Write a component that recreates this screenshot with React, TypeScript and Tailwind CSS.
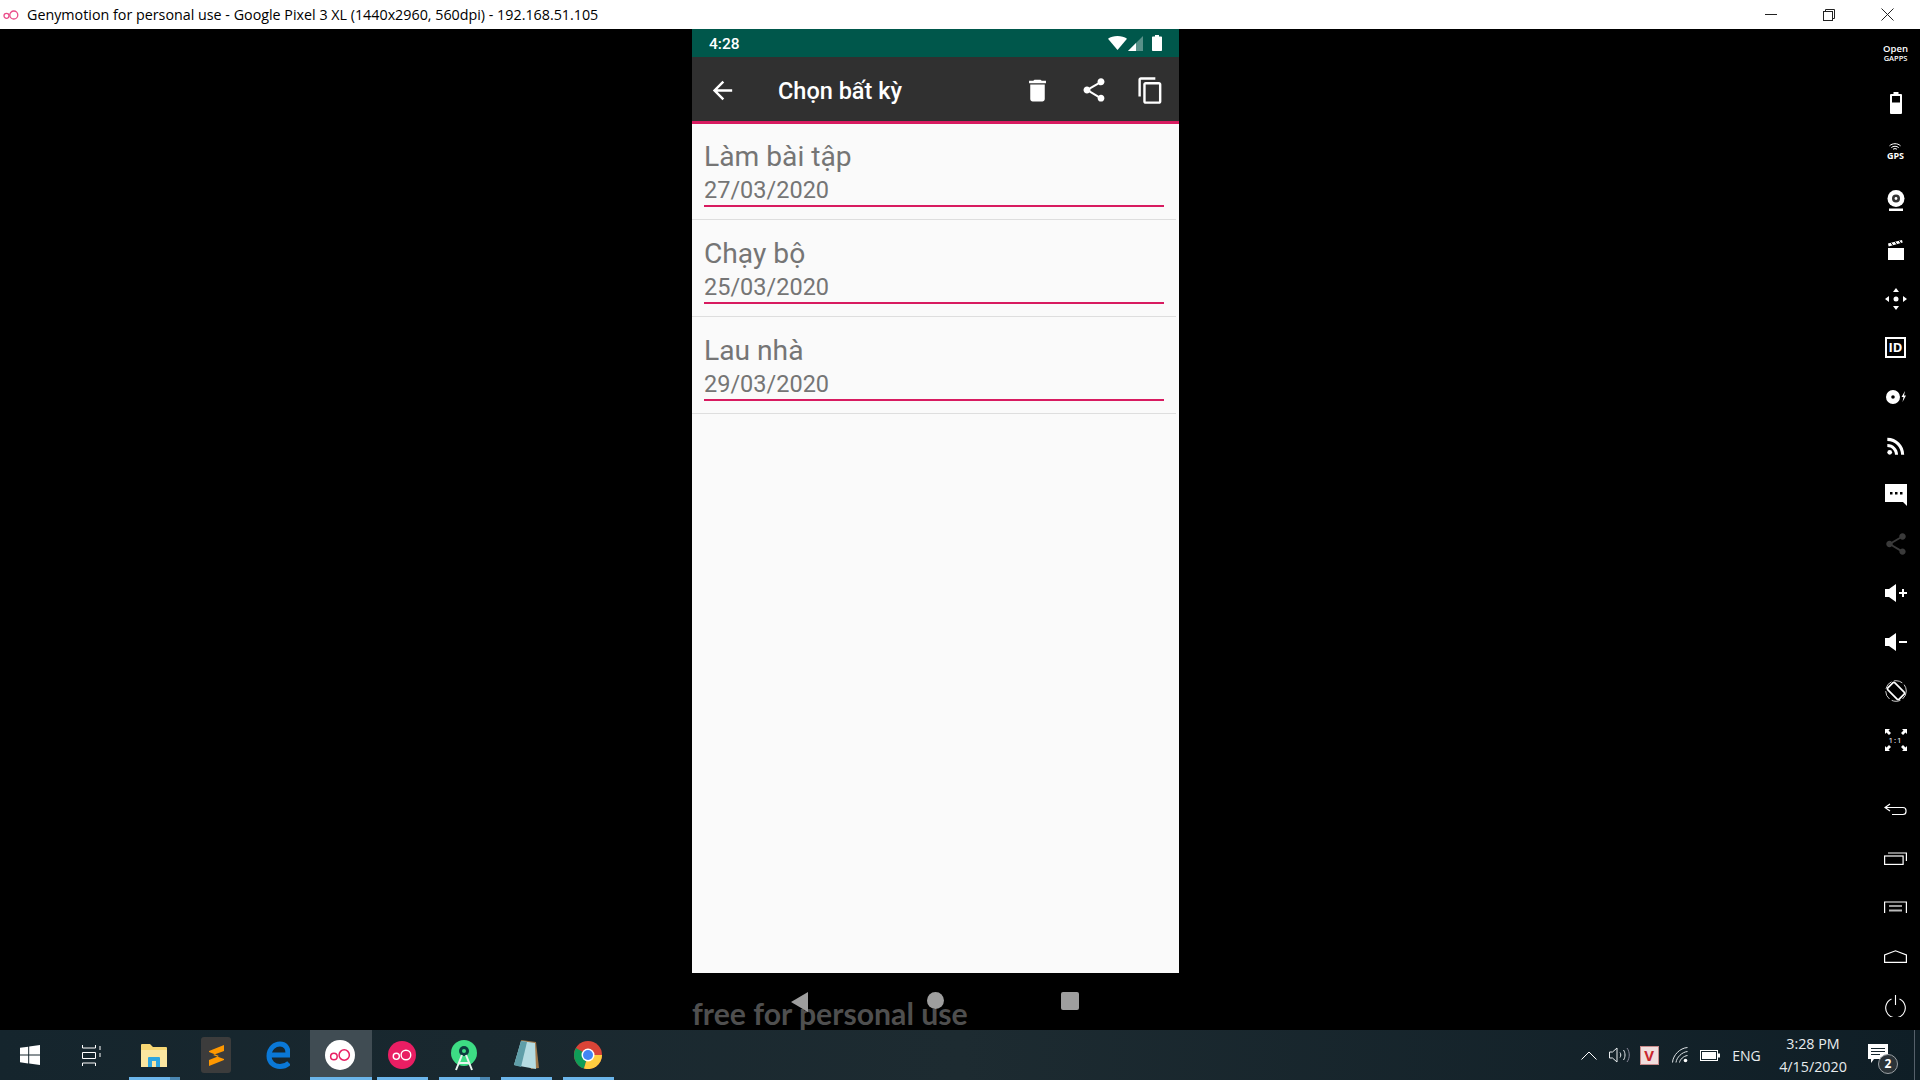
import { MdArrowBack, MdContentCopy, MdDelete, MdShare, MdRssFeed } from "react-icons/md"
import type { ReactNode } from "react"

const tasks = [
    { title: "Làm bài tập", date: "27/03/2020" },
    { title: "Chạy bộ", date: "25/03/2020" },
    { title: "Lau nhà", date: "29/03/2020" },
]

function GenyLogo({ size, ring, bg }: { size: number; ring: string; bg: string }) {
    return (
        <svg width={size} height={size} viewBox="0 0 32 32">
            <circle cx="16" cy="16" r="16" fill={bg} />
            <circle cx="9.500" cy="17.500" r="3.500" fill="none" stroke={ring} strokeWidth="1.600" />
            <circle cx="20.500" cy="16" r="5.500" fill="none" stroke={ring} strokeWidth="1.600" />
        </svg>
    )
}

function SideSlot({ children }: { children: ReactNode }) {
    return <div className="h-[49px] shrink-0 flex items-center justify-center text-white">{children}</div>
}

function Sidebar() {
    return (
        <div className="w-[49px] shrink-0 flex flex-col font-['Open_Sans',sans-serif]">
            <SideSlot>
                <div className="flex flex-col items-center gap-[2px] text-white">
                    <span className="text-[9.500px] font-semibold leading-[8px]">Open</span>
                    <span className="text-[7.500px] font-semibold leading-[7px]">GAPPS</span>
                </div>
            </SideSlot>
            <SideSlot>
                <svg width="12" height="22" viewBox="0 0 12 22" fill="white">
                    <path d="M3.500 0h5v2H11a1 1 0 0 1 1 1v18a1 1 0 0 1-1 1H1a1 1 0 0 1-1-1V3a1 1 0 0 1 1-1h2.500z" />
                    <rect x="2" y="4" width="8" height="6.500" fill="black" />
                </svg>
            </SideSlot>
            <SideSlot>
                <div className="flex flex-col items-center">
                    <svg width="12" height="8" viewBox="0 0 12 8" fill="none" stroke="white" strokeWidth="1">
                        <path d="M.5 2.800C3.500 0 8.500 0 11.500 2.800M2.300 4.600c2-1.800 5.400-1.800 7.400 0M4 6.300c1.100-.9 2.900-.9 4 0" />
                    </svg>
                    <span className="text-[9px] font-bold leading-[10px]">GPS</span>
                </div>
            </SideSlot>
            <SideSlot>
                <svg width="18" height="21" viewBox="0 0 18 21">
                    <circle cx="9" cy="8.500" r="8.500" fill="white" />
                    <circle cx="9" cy="8.500" r="4" fill="#333" />
                    <circle cx="9" cy="8.500" r="1.400" fill="white" />
                    <rect x="2" y="18.500" width="14" height="2.500" fill="white" />
                </svg>
            </SideSlot>
            <SideSlot>
                <svg width="16" height="20" viewBox="0 0 16 20" fill="white">
                    <rect x="0" y="8" width="16" height="12" />
                    <path d="M0 3.500 14 0l.7 2.600L.7 6.400z" />
                    <path d="M3 2.700 5 5.500M7 1.700l2 2.800M11 .7l2 2.800" stroke="black" strokeWidth="1" />
                </svg>
            </SideSlot>
            <SideSlot>
                <svg width="22" height="22" viewBox="0 0 22 22" fill="white">
                    <path d="M11 0l3 4H8zM11 22l-3-4h6zM0 11l4-3v6zM22 11l-4 3V8z" />
                    <circle cx="11" cy="11" r="2.500" />
                </svg>
            </SideSlot>
            <SideSlot>
                <div className="w-[21px] h-[21px] border-2 border-white flex items-center justify-center text-[13px] font-bold leading-none">
                    ID
                </div>
            </SideSlot>
            <SideSlot>
                <svg width="20" height="14" viewBox="0 0 20 14" fill="white">
                    <path fillRule="evenodd" d="M7 0a7 7 0 1 1 0 14A7 7 0 0 1 7 0zm0 5.200a1.800 1.800 0 1 0 0 3.600 1.800 1.800 0 0 0 0-3.600z" />
                    <path d="M19 1l-3.500 6h2l-1 5L20 5.500h-2z" />
                </svg>
            </SideSlot>
            <SideSlot>
                <MdRssFeed size={26} />
            </SideSlot>
            <SideSlot>
                <svg width="22" height="22" viewBox="0 0 22 22" fill="white">
                    <path fillRule="evenodd" d="M0 0h22v22l-4-4H0zm5 8v2.500h2.500V8zm5 0v2.500h2.500V8zm5 0v2.500h2.500V8z" />
                </svg>
            </SideSlot>
            <SideSlot>
                <MdShare size={26} color="#3a3a3a" />
            </SideSlot>
            <SideSlot>
                <svg width="22" height="18" viewBox="0 0 22 18" fill="white">
                    <path d="M0 5h4l7-5v18l-7-5H0z" />
                    <path d="M14 8h3V5h2v3h3v2h-3v3h-2v-3h-3z" />
                </svg>
            </SideSlot>
            <SideSlot>
                <svg width="22" height="18" viewBox="0 0 22 18" fill="white">
                    <path d="M0 5h4l7-5v18l-7-5H0z" />
                    <rect x="14" y="8" width="8" height="2" />
                </svg>
            </SideSlot>
            <SideSlot>
                <svg width="22" height="22" viewBox="0 0 22 22" fill="none" stroke="white">
                    <circle cx="11" cy="11" r="10.300" strokeWidth=".8" strokeDasharray="9 2.500" />
                    <rect x="6" y="3" width="10" height="16" rx="1.500" strokeWidth="1.700" transform="rotate(-45 11 11)" />
                </svg>
            </SideSlot>
            <SideSlot>
                <div className="relative w-[22px] h-[22px] flex items-center justify-center text-[8px] tracking-[1px] leading-none">
                    1:1
                    <svg className="absolute inset-0" width="22" height="22" viewBox="0 0 22 22" fill="white">
                        <path d="M0 0h5L3.500 1.500 6 4 4 6 1.500 3.500 0 5zM22 0v5l-1.500-1.500L18 6l-2-2 2.500-2.500L17 0zM0 22v-5l1.500 1.500L4 16l2 2-2.500 2.500L5 22zM22 22h-5l1.500-1.500L16 18l2-2 2.500 2.500L22 17z" />
                    </svg>
                </div>
            </SideSlot>
            <div className="h-[21px] shrink-0" />
            <SideSlot>
                <svg width="23" height="13" viewBox="0 0 23 13" fill="none" stroke="white" strokeWidth="1.200">
                    <path d="M6 1 1 4.500 6 8" />
                    <path d="M1 4.500h18a3 3 0 0 1 3 3v1a3 3 0 0 1-3 3H8" />
                </svg>
            </SideSlot>
            <SideSlot>
                <svg width="23" height="13" viewBox="0 0 23 13" fill="none" stroke="white" strokeWidth="1.200">
                    <rect x=".6" y="4" width="18.500" height="8.400" />
                    <path d="M4 1h18.400v8" />
                </svg>
            </SideSlot>
            <SideSlot>
                <svg width="23" height="13" viewBox="0 0 23 13" fill="none" stroke="white" strokeWidth="1.200">
                    <path d="M.6 12V1h21.800v11" />
                    <path d="M5 5h13" />
                    <path d="M5 9.500h13" stroke="#bbb" strokeWidth="2" />
                </svg>
            </SideSlot>
            <SideSlot>
                <svg width="23" height="13" viewBox="0 0 23 13" fill="none" stroke="white" strokeWidth="1.200">
                    <path d="M.6 12.400V5L11.500.8 22.400 5v7.400z" />
                </svg>
            </SideSlot>
            <SideSlot>
                <svg width="21" height="22" viewBox="0 0 21 22" fill="none" stroke="white" strokeWidth="1.100">
                    <path d="M6.500 4A9.800 9.800 0 1 0 14.500 4" />
                    <path d="M10.500 0v10" />
                </svg>
            </SideSlot>
        </div>
    )
}

function TaskCell({ children, underline, active, split }: { children: ReactNode; underline?: boolean; active?: boolean; split?: boolean }) {
    return (
        <div className="relative w-[62px] h-full flex items-center justify-center">
            {active && <div className="absolute inset-y-0 left-0 right-0 bg-[#404c53]" />}
            <div className="relative -ml-[2px]">{children}</div>
            {underline && <div className={`absolute bottom-0 h-[3px] bg-[#6bb5ea] ${active ? "left-0 right-0" : "left-[5.500px] right-[5.500px]"}`} />}
            {split && <div className="absolute bottom-0 right-[5.500px] w-[10px] h-[3px] bg-[#4a86b0]" />}
        </div>
    )
}

function Taskbar() {
    return (
        <div className="h-[50px] shrink-0 flex items-center bg-gradient-to-r from-[#15252d] via-[#1d2b31] to-[#0f1e26] font-['Open_Sans',sans-serif] text-[#e8ecee]">
            <div className="w-[59px] h-full flex items-center justify-center">
                <svg width="20" height="20" viewBox="0 0 20 20" fill="white">
                    <path d="M0 2.800 8.200 1.700v7.900H0zM9.200 1.500 20 0v9.600H9.200zM0 10.500h8.200v7.900L0 17.200zM9.200 10.500H20V20L9.200 18.500z" />
                </svg>
            </div>
            <div className="w-[64.500px] h-full flex items-center justify-center">
                <svg width="19" height="23" viewBox="0 0 19 23" fill="none" stroke="white" strokeWidth="1">
                    <path d="M.5 4h13M.5 1v3M13.500 1v3M.5 8.500h13v6H.5zM.5 19h13M.5 19v3M13.500 19v3M18 2v4M18 9v4" />
                </svg>
            </div>
            <TaskCell underline split>
                <svg width="28" height="26" viewBox="0 0 28 26">
                    <path d="M1 3a1 1 0 0 1 1-1h8l3 3h13a1 1 0 0 1 1 1v18a1 1 0 0 1-1 1H2a1 1 0 0 1-1-1z" fill="#f7d774" />
                    <rect x="1" y="8" width="26" height="17" fill="#fbe6a0" />
                    <path d="M8 25v-9a1 1 0 0 1 1-1h10a1 1 0 0 1 1 1v9h-4v-6h-4v6z" fill="#2ea6e0" />
                </svg>
            </TaskCell>
            <TaskCell>
                <svg width="30" height="36" viewBox="0 0 30 36">
                    <rect width="30" height="36" rx="3" fill="#3c3c3c" />
                    <path d="M8 14 23 8v6l-11 4 11 4v1L8 29v-6l10-4-10-4z" fill="#ff9800" />
                </svg>
            </TaskCell>
            <TaskCell>
                <svg width="25" height="28" viewBox="0 0 25 28" fill="none" stroke="#0a78d7" strokeWidth="5">
                    <path d="M24 22c-3 3-6 3.500-9 3.500-6 0-11-4-11-10.500C4 7 10 3 15 3c5 0 8 3.500 8 9v2H4" />
                </svg>
            </TaskCell>
            <TaskCell underline active>
                <GenyLogo size={30} bg="#ffffff" ring="#e91e63" />
            </TaskCell>
            <TaskCell underline>
                <GenyLogo size={28} bg="#e91e63" ring="#ffffff" />
            </TaskCell>
            <TaskCell underline split>
                <svg width="28" height="32" viewBox="0 0 28 32">
                    <circle cx="14" cy="14" r="13" fill="#3ddc84" />
                    <circle cx="14" cy="12" r="5" fill="#0c3b3f" />
                    <circle cx="14" cy="12" r="2" fill="#3ddc84" />
                    <path d="M12 16 6 31M16 16l6 15M8 24h12" stroke="#e7f4ee" strokeWidth="2" fill="none" />
                </svg>
            </TaskCell>
            <TaskCell underline>
                <svg width="28" height="32" viewBox="0 0 28 32">
                    <path d="M9 1 24 3l3 26-8 1z" fill="#a0784a" />
                    <path d="M9 2 23 4l1 26-22-4z" fill="#b6dce2" />
                    <path d="M2 26 9 2l6 1-6 25z" fill="#5f9ea8" />
                </svg>
            </TaskCell>
            <TaskCell underline>
                <svg width="28" height="28" viewBox="0 0 28 28">
                    <circle cx="14" cy="14" r="14" fill="#db4437" />
                    <path d="M14 14 2 7A14 14 0 0 0 10 27.500z" fill="#0f9d58" />
                    <path d="M14 14h14A14 14 0 0 1 10 27.500z" fill="#ffcd40" />
                    <circle cx="14" cy="14" r="6.500" fill="white" />
                    <circle cx="14" cy="14" r="5" fill="#4285f4" />
                </svg>
            </TaskCell>
            <div className="flex-1" />
            <div className="w-[30px] flex justify-center">
                <svg width="16" height="9" viewBox="0 0 16 9" fill="none" stroke="white" strokeWidth="1">
                    <path d="M.5 8.500 8 1l7.500 7.500" />
                </svg>
            </div>
            <div className="w-[30px] flex justify-center">
                <svg width="21" height="16" viewBox="0 0 21 16" fill="none" stroke="#e8ecee" strokeWidth="1">
                    <path d="M.5 5h3L8 1v14l-4.500-4h-3z" />
                    <path d="M11 5.500c1 1.500 1 3.500 0 5M14.500 3c2 3 2 7 0 10" />
                    <path d="M18 1c3 4 3 10 0 14" stroke="#889" />
                </svg>
            </div>
            <div className="w-[30px] flex justify-center">
                <div className="w-[19px] h-[19px] bg-[#f1dede] border border-[#c98a8a] flex items-center justify-center text-[#c9252d] text-[15px] font-bold leading-none">V</div>
            </div>
            <div className="w-[31px] flex justify-center">
                <svg width="16" height="16" viewBox="0 0 16 16" fill="none" stroke="#dfe4e6" strokeWidth="1">
                    <path d="M.5 15.500C1 8 8 1 15.500.5M4 15.500C4.500 10.500 10 5 15.500 4.500M7.500 15.500c.5-3 4-6.500 8-7" />
                    <circle cx="13.500" cy="13.500" r="1.800" fill="white" stroke="none" />
                </svg>
            </div>
            <div className="w-[29px] flex justify-center">
                <svg width="20" height="11" viewBox="0 0 20 11">
                    <rect x=".5" y=".5" width="17" height="10" fill="none" stroke="white" />
                    <rect x="2" y="2" width="14" height="7" fill="white" />
                    <rect x="18" y="3.500" width="2" height="4" fill="white" />
                </svg>
            </div>
            <span className="w-[45px] text-center text-[14px]">ENG</span>
            <div className="w-[84px] flex flex-col items-center text-[14.300px] leading-[23px] ml-[2px] whitespace-nowrap">
                <span>3:28 PM</span>
                <span>4/15/2020</span>
            </div>
            <div className="relative w-[59px] h-full flex items-center pl-[13px]">
                <svg className="mb-[3px]" width="20" height="20" viewBox="0 0 20 20">
                    <path d="M0 0h20v15H6l-3 4v-4H0z" fill="white" />
                    <path d="M3 4.500h14M3 7.500h14M3 10.500h9" stroke="#15252d" strokeWidth="1" />
                </svg>
                <div className="absolute left-[23px] top-[24px] w-[20px] h-[20px] rounded-full bg-[#2b3338] border border-[#9aa0a4] flex items-center justify-center text-[12px] font-bold text-white leading-none">
                    2
                </div>
            </div>
            <div className="w-[6px] h-full border-l border-[#55606a]" />
        </div>
    )
}

export default function App() {
    return (
        <div className="w-[1920px] h-[1080px] flex flex-col bg-black overflow-hidden font-['Roboto',sans-serif]">
            <div className="h-[29px] shrink-0 bg-white flex items-center text-black">
                <svg className="ml-[3px]" width="16" height="10" viewBox="0 0 16 10" fill="none" stroke="#ea4c89" strokeWidth="1.300">
                    <circle cx="3.500" cy="5.800" r="2.500" />
                    <circle cx="10.800" cy="5" r="4" />
                </svg>
                <span className="ml-[8px] text-[14.300px] font-['Open_Sans',sans-serif]">
                    Genymotion for personal use - Google Pixel 3 XL (1440x2960, 560dpi) - 192.168.51.105
                </span>
                <div className="flex-1" />
                <div className="flex pr-[4px] h-full">
                    <div className="w-[58px] flex items-center justify-center">
                        <div className="w-[12px] h-[1px] bg-[#222]" />
                    </div>
                    <div className="w-[58px] flex items-center justify-center">
                        <svg width="12" height="12" viewBox="0 0 12 12" fill="none" stroke="#222" strokeWidth="1">
                            <rect x=".5" y="2.500" width="9" height="9" />
                            <path d="M2.500 2.500v-2h9v9h-2" />
                        </svg>
                    </div>
                    <div className="w-[58px] flex items-center justify-center">
                        <svg width="13" height="13" viewBox="0 0 13 13" stroke="#222" strokeWidth="1">
                            <path d="M.5.500l12 12M12.500.5l-12 12" />
                        </svg>
                    </div>
                </div>
            </div>

            <div className="flex-1 flex min-h-0">
                <div className="ml-[692px] w-[487px] flex flex-col">
                    <div className="h-[28px] shrink-0 bg-[#00574b] flex items-center pl-[17px] pr-[17px] text-white">
                        <span className="text-[15.500px] font-medium pt-[3px]">4:28</span>
                        <div className="flex-1" />
                        <svg width="19" height="14" viewBox="0 0 19 14" fill="white">
                            <path d="M9.500 14 0 2.800C2.500 1 5.800 0 9.500 0s7 1 9.500 2.800z" />
                        </svg>
                        <svg className="ml-[1px]" width="15" height="15" viewBox="0 0 15 15">
                            <path d="M15 0v15H0z" fill="#ffffff" fillOpacity=".35" />
                            <path d="M8 7v8H0z" fill="white" />
                        </svg>
                        <svg className="ml-[9px]" width="10" height="16" viewBox="0 0 10 16" fill="white">
                            <path d="M3 0h4v1.500h2.200a.8.8 0 0 1 .8.800v12.900a.8.800 0 0 1-.8.800H.8a.8.800 0 0 1-.8-.8V2.300a.8.800 0 0 1 .8-.8H3z" />
                        </svg>
                    </div>
                    <div className="h-[67px] shrink-0 bg-[#303030] border-b-[3px] border-[#d81b60] pt-[2px] flex items-center text-white">
                        <MdArrowBack className="ml-[16px]" size={29} />
                        <span className="ml-[41px] pt-[3px] text-[23.500px] font-medium">Chọn bất kỳ</span>
                        <div className="flex-1" />
                        <MdDelete size={29} />
                        <MdShare className="ml-[28px]" size={28} />
                        <MdContentCopy className="ml-[28px] mr-[14px]" size={29} />
                    </div>
                    <div className="flex-1 bg-[#fafafa]">
                        {tasks.map((task) => (
                            <div key={task.date} className="h-[97px] mr-[3px] border-b border-[#dedede] pt-[16px] first:h-[96px] first:pt-[15px]">
                                <div className="mx-[12px] text-[#757575]">
                                    <div className="text-[28.200px] leading-[35px]">{task.title}</div>
                                    <div className="mt-[1px] text-[23.500px] leading-[30px] h-[30px] box-content border-b-2 border-[#d81b60]">{task.date}</div>
                                </div>
                            </div>
                        ))}
                    </div>
                    <div className="relative h-[57px] shrink-0 overflow-hidden">
                        <span className="absolute left-0 top-[22px] text-[30.200px] leading-[36px] font-bold text-[#4f4f4f] font-['Lato',sans-serif] whitespace-nowrap">
                            free for personal use
                        </span>
                        <div className="absolute inset-0 flex items-start pt-[19px]">
                            <svg className="ml-[99px]" width="17" height="20" viewBox="0 0 17 20" fill="#9e9e9e">
                                <path d="M17 0v20L0 10z" />
                            </svg>
                            <div className="ml-[119px] w-[17px] h-[17px] rounded-full bg-[#9e9e9e]" />
                            <div className="ml-[117px] w-[18px] h-[18px] rounded-[2px] bg-[#9e9e9e]" />
                        </div>
                    </div>
                </div>
                <div className="flex-1" />
                <Sidebar />
            </div>

            <Taskbar />
        </div>
    )
}
